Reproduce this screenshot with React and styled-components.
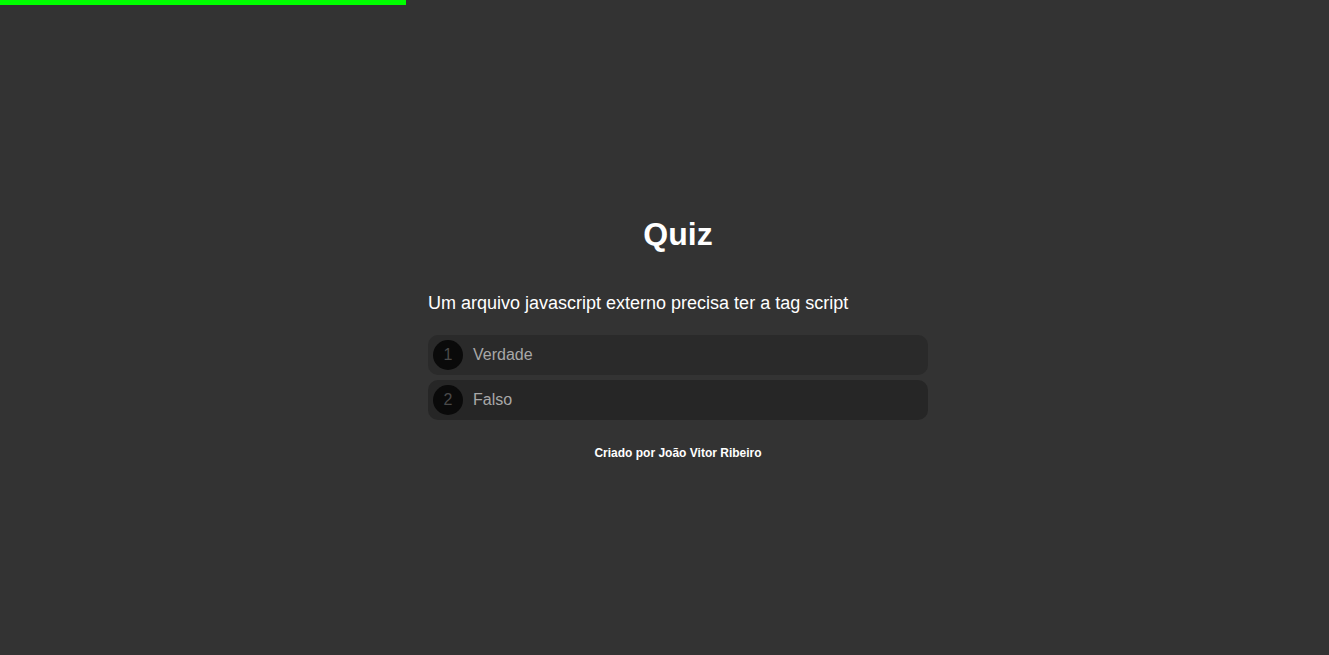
import React from "react";
import styled, { createGlobalStyle } from "styled-components";

const Global = createGlobalStyle`
  html, body { margin: 0; padding: 0; background: #333333; }
  body { font-family: "Liberation Sans", Arial, sans-serif; color: #ffffff; }
  * { box-sizing: border-box; }
`;

const Progress = styled.div`
  position: fixed;
  top: 0;
  left: 0;
  height: 5px;
  background: #00ff00;
`;

const Page = styled.main`
  min-height: 100vh;
  padding-top: 20px;
  padding-left: 27px;
  display: flex;
  flex-direction: column;
  align-items: center;
  justify-content: center;
`;

const Quiz = styled.section`
  width: 500px;
  display: flex;
  flex-direction: column;
`;

const Title = styled.h1`
  margin: 0;
  font-size: 32px;
  line-height: 37px;
  font-weight: 700;
  text-align: center;
  color: #ffffff;
`;

const Question = styled.p`
  margin: 40px 0 0;
  font-size: 18px;
  line-height: 21px;
  color: #ffffff;
`;

const Options = styled.div`
  margin-top: 21px;
  display: flex;
  flex-direction: column;
  gap: 5px;
`;

const Option = styled.div`
  height: 40px;
  border-radius: 10px;
  background: ${(p) => (p.$alt ? "#262626" : "#2a2a2a")};
  display: flex;
  align-items: center;
  padding-left: 5px;
  gap: 10px;
  cursor: pointer;
`;

const Num = styled.span`
  width: 30px;
  height: 30px;
  border-radius: 50%;
  background: #0a0a0a;
  color: #4a4a4a;
  font-size: 16px;
  display: flex;
  align-items: center;
  justify-content: center;
`;

const Label = styled.span`
  font-size: 16px;
  color: #a8a8a8;
`;

const Footer = styled.footer`
  margin-top: 26px;
  font-size: 12px;
  line-height: 14px;
  font-weight: 700;
  text-align: center;
  color: #ffffff;
`;

export default function App() {
  const options = ["Verdade", "Falso"];
  return (
    <>
      <Global />
      <Progress style={{ width: "406px" }} />
      <Page>
        <Quiz>
          <Title>Quiz</Title>
          <Question>Um arquivo javascript externo precisa ter a tag script</Question>
          <Options>
            {options.map((o, i) => (
              <Option key={o} $alt={i === 1}>
                <Num>{i + 1}</Num>
                <Label>{o}</Label>
              </Option>
            ))}
          </Options>
          <Footer>Criado por João Vitor Ribeiro</Footer>
        </Quiz>
      </Page>
    </>
  );
}
